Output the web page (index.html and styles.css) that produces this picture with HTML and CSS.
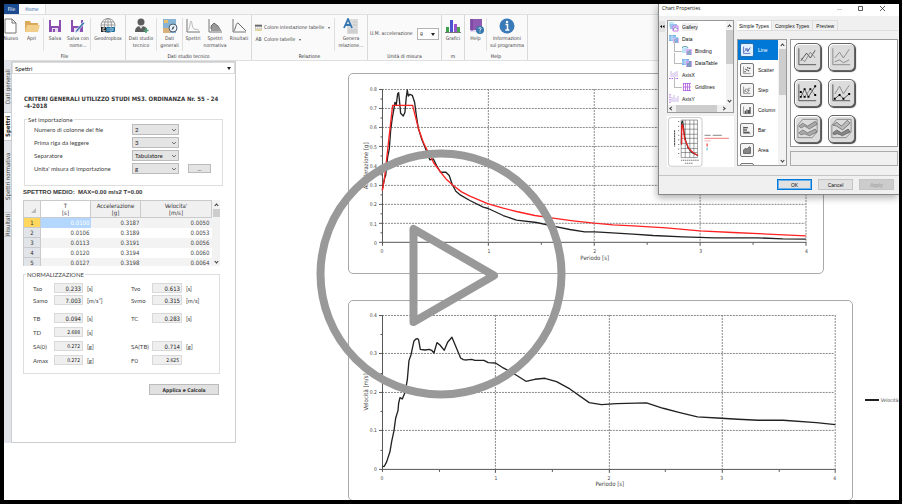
FILE: index.html
```html
<!DOCTYPE html>
<html lang="it">
<head>
<meta charset="utf-8">
<title>Spettri</title>
<link rel="stylesheet" href="styles.css">
</head>
<body>
<div class="app">
  <nav class="tabstrip"><button class="tab-file">File</button><button class="tab-home">Home</button></nav>

  <header class="ribbon">
    <section class="group group-file">
      <div class="tools">
        <button class="tool clipped"><svg viewBox="0 0 16 16"><path d="M3 1h7l4 4v10H3z" fill="#fff" stroke="#777"/><path d="M10 1v4h4" fill="none" stroke="#777"/></svg><span>Nuovo</span></button>
        <button class="tool sep"><svg viewBox="0 0 16 16"><path d="M1 3h5l1 2h7v9H1z" fill="#dba957"/><path d="M3 7h13l-2 7H1z" fill="#f2cf8b"/></svg><span>Apri</span></button>
        <button class="tool"><svg viewBox="0 0 16 16"><path d="M2 2h12v12H2z" fill="#8a4fb0"/><path d="M4 2h8v6H4z" fill="#fff"/><path d="M5 10h6v4H5z" fill="#e9dcf2"/><path d="M6 11h2v3H6z" fill="#8a4fb0"/></svg><span>Salva</span></button>
        <button class="tool sep"><svg viewBox="0 0 16 16"><path d="M1 2h12v12H1z" fill="#8a4fb0"/><path d="M3 2h8v6H3z" fill="#fff"/><path d="M4 10h6v4H4z" fill="#e9dcf2"/><path d="M15 5l-8 9-2 1 1-3 7-8z" fill="#3d78b4" stroke="#fff" stroke-width=".6"/></svg><span>Salva con nome...</span></button>
        <button class="tool"><svg viewBox="0 0 16 16"><g fill="none" stroke="#888" stroke-width=".8"><circle cx="8" cy="7.500" r="7"/><ellipse cx="8" cy="7.500" rx="3.500" ry="7"/><path d="M1 7h14M2 4h12M8 0v15"/></g><rect x="1" y="9" width="5" height="5" fill="#222"/><rect x="6" y="9" width="9" height="5" rx="1" fill="#1d6c9c"/><path d="M5 10H3v3h2v-1" fill="none" stroke="#fff" stroke-width=".8"/><path d="M8 10v3M10 10h2v3h-2zM13 10v3" fill="none" stroke="#bfe0f2" stroke-width=".7"/></svg><span>Geodropbox</span></button>
      </div>
      <h2>File</h2>
    </section>
    <section class="group group-studio">
      <div class="tools">
        <button class="tool sep"><svg viewBox="0 0 16 16"><circle cx="8" cy="4" r="3.500" fill="#5c5c5c"/><path d="M2 14c0-5 3-6 6-6s6 1 6 4l-2 2z" fill="#5c5c5c"/><path d="M6 8l2 3 2-3z" fill="#ddd"/><path d="M13 10v5M10.500 12.500h5" stroke="#4b9b72" stroke-width="1.500"/></svg><span>Dati studio tecnico</span></button>
        <button class="tool sep"><svg viewBox="0 0 16 16"><rect x="1" y="1" width="13" height="14" fill="#87b4d4"/><path d="M2 2h4v3H2z" fill="#e6bd6b"/><path d="M1 10h7v5H1z" fill="#d8b27a"/><circle cx="11" cy="10" r="4" fill="#eef4fa" stroke="#46586e"/><path d="M12.500 8l-1 3-2 1 1-3z" fill="#46586e"/></svg><span>Dati generali</span></button>
        <button class="tool"><svg viewBox="0 0 16 16" fill="none"><path d="M2 1v13h13" stroke="#777"/><path d="M3 12c2-1 2-9 3-9s1 7 3 8l5 1" stroke="#aaa" stroke-width=".8"/></svg><span>Spettri</span></button>
        <button class="tool"><svg viewBox="0 0 16 16"><path d="M4 13V8l3-3 4 3 2 5z" fill="#999"/><path d="M2 1v13h13" stroke="#777" fill="none"/><path d="M4 11V8l3-3 4 3 3 5" stroke="#555" fill="none" stroke-width=".8"/></svg><span>Spettri normativa</span></button>
        <button class="tool"><svg viewBox="0 0 16 16" fill="none"><path d="M2 1v13h13" stroke="#777"/><path d="M3 13c2-4 2-8 4-8l3 3 5 5" stroke="#666"/></svg><span>Risultati</span></button>
      </div>
      <h2>Dati studio tecnico</h2>
    </section>
    <section class="group group-report">
      <div class="tools">
        <div class="stack">
          <button class="row-tool"><svg viewBox="0 0 8 8"><rect x=".5" y="1" width="7" height="6" fill="#fff" stroke="#aaa" stroke-width=".6"/><rect y="1" width="8" height="2" fill="#666"/><path d="M0 7h8" stroke="#e6d37a" stroke-width="1.500"/><path d="M3 3v4M5.500 3v4M0 5h8" stroke="#aaa" stroke-width=".5"/></svg>Colore intestazione tabelle <i class="caret"></i></button>
          <button class="row-tool"><b>AB</b>Colore tabelle <i class="caret"></i></button>
        </div>
        <button class="tool lead"><svg viewBox="0 0 16 16"><rect x="4" y="1" width="11" height="15" fill="#dcdcdc"/><path d="M5 12h9M5 14h9M10 4h4M10 7h4" stroke="#c4c4c4"/><path d="M1 10L5 1l4 9M2.500 7h5" fill="none" stroke="#3576b5" stroke-width="1.800"/></svg><span>Genera relazione...</span></button>
      </div>
      <h2>Relazione</h2>
    </section>
    <section class="group group-units">
      <div class="tools"><label for="um">U.M. accelerazione</label><div class="pick"><select id="um"><option>g</option></select></div></div>
      <h2>Unità di misura</h2>
    </section>
    <section class="group group-charts">
      <div class="tools"><button class="tool"><svg viewBox="0 0 16 16"><path d="M1 9h3v5H1z" fill="#3ba24c"/><path d="M5 2h3v12H5z" fill="#4a55cf"/><path d="M9 6h3v8H9z" fill="#9a55cc"/><path d="M12 9h3v5h-3z" fill="#46a84e"/><path d="M0 14.500h16" stroke="#777"/></svg><span>Grafici</span></button></div>
      <h2>m</h2>
    </section>
    <section class="group group-help">
      <div class="tools">
        <button class="tool sep"><svg viewBox="0 0 16 16"><path d="M2 1h12v12H2z" fill="#8f5bb2"/><path d="M2 12h12v2H2z" fill="#e7daf0"/><path d="M4 1v12" stroke="#6d3c92"/><circle cx="12" cy="12" r="4" fill="#3678ad"/><path d="M10.800 11c0-2 2.600-1.600 2.400-.2L12 12v.8M12 13.500v1" stroke="#fff" fill="none" stroke-width=".8"/></svg><span>Help</span></button>
        <button class="tool"><svg viewBox="0 0 16 16"><circle cx="8" cy="8" r="7.500" fill="#3b7ab8"/><circle cx="8" cy="4" r="1.200" fill="#fff"/><path d="M6.500 6.500H8.500V12M6.300 12h4" stroke="#fff" fill="none" stroke-width="1.500"/></svg><span class="nowrap">Informazioni<br>sul programma</span></button>
      </div>
      <h2>Help</h2>
    </section>
  </header>

  <main class="work">
    <nav class="side-tabs"><button>Dati generali</button><button class="active">Spettri</button><button>Spettri normativa</button><button>Risultati</button></nav>

    <section class="panel">
      <div class="pick page-pick"><select aria-label="Pagina"><option>Spettri</option></select></div>
      <div class="panel-body">
        <h1>CRITERI GENERALI UTILIZZO STUDI MS3. ORDINANZA Nr. 55 - 24<br>-4-2018</h1>
        <fieldset class="import">
          <legend>Set importazione</legend>
          <label for="cols">Numero di colonne del file</label><select id="cols"><option>2</option></select>
          <label for="first">Prima riga da leggere</label><select id="first"><option>3</option></select>
          <label for="separator">Separatore</label><select id="separator"><option>Tabulatore</option></select>
          <label for="unit">Unita' misura di importazione</label><select id="unit"><option>g</option></select><button>...</button>
        </fieldset>
        <h3>SPETTRO MEDIO:&nbsp; MAX=0.00 m/s2 T=0.00</h3>
        <div class="sheet">
          <table>
            <thead><tr><th class="corner"><svg viewBox="0 0 5 5"><path d="M5 0v5H0z" fill="#bbb"/></svg></th><th class="current">T<br>[s]</th><th>Accelerazione<br>[g]</th><th>Velocita'<br>[m/s]</th></tr></thead>
            <tbody>
              <tr><th class="current">1</th><td class="selected">0.0100</td><td>0.3187</td><td>0.0050</td></tr>
              <tr><th>2</th><td>0.0106</td><td>0.3189</td><td>0.0053</td></tr>
              <tr><th>3</th><td>0.0113</td><td>0.3191</td><td>0.0056</td></tr>
              <tr><th>4</th><td>0.0120</td><td>0.3194</td><td>0.0060</td></tr>
              <tr><th>5</th><td>0.0127</td><td>0.3198</td><td>0.0064</td></tr>
            </tbody>
          </table>
          <div class="scroll"><i class="up"></i><span></span><i class="down"></i></div>
        </div>
        <fieldset class="norm">
          <legend>NORMALIZZAZIONE</legend>
          <div class="fields">
            <label for="tao">Tao</label><input id="tao" value="0.233"><span>[s]</span>
            <label for="tvo">Tvo</label><input id="tvo" value="0.613"><span>[s]</span>
            <label for="samo">Samo</label><input id="samo" value="7.003"><span>[m/s²]</span>
            <label for="svmo">Svmo</label><input id="svmo" value="0.315"><span>[m/s]</span>
          </div>
          <div class="fields wide">
            <label for="tb">TB</label><input id="tb" value="0.094"><span>[s]</span>
            <label for="tc">TC</label><input id="tc" value="0.283"><span>[s]</span>
            <label for="td">TD</label><input class="light" id="td" value="2.688"><span>[s]</span>
            <span></span><span></span><span></span>
            <label for="sa0">SA(0)</label><input class="light" id="sa0" value="0.272"><span>[g]</span>
            <label for="satb">SA(TB)</label><input id="satb" value="0.714"><span>[g]</span>
            <label for="amax">Amax</label><input class="light" id="amax" value="0.272"><span>[g]</span>
            <label for="f0">F0</label><input class="light" id="f0" value="2.625"><span></span>
          </div>
        </fieldset>
        <button class="apply">Applica e Calcola</button>
      </div>
    </section>

    <section class="charts">
      <div class="card card-acc">
        <svg viewBox="349 74 474 199">
          <g class="grid"><path d="M382 89.500H806M382 108.500H806M382 127.500H806M382 146.500H806M382 166.500H806M382 185.500H806M382 204.500H806M382 223.500H806M488.500 89V243M594.500 89V243M700.500 89V243M806.500 89V243"/></g>
          <g class="axis"><path d="M382.500 89V246M379 242.500H807"/><path d="M379 89.500h3M379 108.500h3M379 127.500h3M379 146.500h3M379 166.500h3M379 185.500h3M379 204.500h3M379 223.500h3M380.500 99h2M380.500 118h2M380.500 137h2M380.500 156h2M380.500 175h2M380.500 195h2M380.500 214h2M380.500 233h2M488.500 243v3M594.500 243v3M700.500 243v3M806.500 243v3M435.500 243v2M541.500 243v2M647.500 243v2M753.500 243v2"/></g>
          <g class="ticks"><text x="377" y="91">0.8</text><text x="377" y="110">0.7</text><text x="377" y="129">0.6</text><text x="377" y="149">0.5</text><text x="377" y="168">0.4</text><text x="377" y="187">0.3</text><text x="377" y="206">0.2</text><text x="377" y="226">0.1</text><text x="377" y="245">0</text></g>
          <g class="ticks mid"><text x="382" y="253">0</text><text x="489" y="253">1</text><text x="595" y="253">2</text><text x="701" y="253">3</text><text x="807" y="253">4</text></g>
          <text class="name" x="595" y="260">Periodo [s]</text>
          <text class="name" transform="translate(368 166) rotate(-90)">Accelerazione [g]</text>
          <g transform="translate(340 64) scale(.33333)">
            <polyline class="line" points="127,378 134,342 137,335 143,280 148,255 152,200 157,162 160,145 165,115 169,122 173,90 176,86 179,115 182,148 190,156 195,145 199,100 202,78 205,96 210,91 217,94 224,115 230,160 235,192 245,225 260,262 270,288 280,285 290,305 302,325 318,325 328,335 337,362 348,382 362,394 390,410 430,430 445,434 490,455 530,469 590,476 640,487 690,497 735,504 763,504 780,505 880,511 940,515 1030,519 1125,522 1255,522 1330,525 1399,526"/>
            <polyline class="line red" points="127,380 134,340 145,240 158,124 218,124 235,192 250,235 265,265 282,298 300,322 320,347 340,365 365,384 390,397 445,420 490,433 530,443 585,455 640,463 700,471 763,478 820,483 880,486 980,492 1080,501 1180,506 1399,516"/>
          </g>
        </svg>
      </div>
      <div class="card-row">
        <div class="card card-vel">
          <svg viewBox="349 301 503 199">
            <g class="grid"><path d="M382 315.500H835M382 353.500H835M382 392.500H835M382 430.500H835M495.500 315V469M609.500 315V469M722.500 315V469M835.500 315V469"/></g>
            <g class="axis"><path d="M382.500 315V472M379 469.500H836"/><path d="M379 315.500h3M379 353.500h3M379 392.500h3M379 430.500h3M380.500 334.500h2M380.500 373.500h2M380.500 411.500h2M380.500 450.500h2M495.500 470v3M609.500 470v3M722.500 470v3M835.500 470v3M439.500 470v2M552.500 470v2M665.500 470v2M779.500 470v2"/></g>
            <g class="ticks"><text x="377" y="317">0.4</text><text x="377" y="355">0.3</text><text x="377" y="394">0.2</text><text x="377" y="432">0.1</text><text x="377" y="471">0</text></g>
            <g class="ticks mid"><text x="382" y="480">0</text><text x="496" y="480">1</text><text x="609" y="480">2</text><text x="722" y="480">3</text><text x="835" y="480">4</text></g>
            <text class="name" x="610" y="486">Periodo [s]</text>
            <text class="name" transform="translate(368 392) rotate(-90)">Velocità [m/s]</text>
            <g transform="translate(340 290) scale(.33333)">
              <polyline class="line" points="127,530 133,529 140,516 150,485 155,455 162,422 167,385 174,362 176,340 180,323 187,327 195,308 202,270 207,212 213,195 222,153 228,147 233,146 236,150 241,178 255,180 268,178 275,181 282,189 291,158 300,165 313,181 323,157 336,142 362,204 370,209 380,210 395,208 405,211 432,211 445,218 467,219 490,234 520,250 558,274 585,268 615,265 650,275 690,297 748,338 785,344 830,341 920,339 970,355 1020,368 1073,381 1145,385 1195,388 1255,391 1330,391 1430,398 1487,404"/>
            </g>
          </svg>
        </div>
        <div class="legend-key"><i></i>Velocità</div>
      </div>
    </section>
  </main>
</div>

<svg class="play" viewBox="0 0 250 250"><circle cx="125" cy="125" r="120.500"/><path d="M97.500 80V173L178 126.500z"/></svg>

<div class="dialog" role="dialog" aria-label="Chart Properties">
  <div class="titlebar"><span>Chart Properties</span>
    <svg viewBox="0 0 60 10"><path d="M1 5.500h5" stroke="#ccc"/><path d="M22.500 2.500h4v4h-4z" fill="none" stroke="#333" stroke-width=".8"/><path d="M44 2l5 5M49 2l-5 5" stroke="#333" stroke-width=".8"/></svg>
  </div>
  <div class="dialog-body">
    <button class="collapse" aria-label="Collapse"><svg viewBox="0 0 6 11"><path d="M3 4v3L1 5.500zM5.500 4v3l-2-1.500z"/></svg></button>
    <div class="left">
      <div class="tree">
        <ul>
          <li><svg viewBox="0 0 10 10"><path d="M0 0h5v5H0z" fill="#bdeaf2"/><path d="M1 2h7v5H1z" fill="#9cc3f0"/><path d="M4 4h5v5H4z" fill="#fff" stroke="#c47be8"/><path d="M4 8l2-3 3 2" stroke="#55a" fill="none" stroke-width=".7"/></svg><span class="current">Gallery</span></li>
          <li><svg viewBox="0 0 10 10"><path d="M0 1h7v6H0z" fill="#74b1ea"/><path d="M0 3h7M0 5h7M3 1v6" stroke="#fff" stroke-width=".5"/><path d="M4 4h6v5H4z" fill="#dcb8f5"/><path d="M6 5v4M8 3v6" stroke="#32a6c2"/></svg><span>Data</span></li>
          <li class="child"><svg viewBox="0 0 10 10"><ellipse cx="3" cy="2" rx="3" ry="1.500" fill="#dff" stroke="#69a"/><path d="M0 2v5h6V2" fill="#bfe3f5"/><path d="M4 3h6v6H4z" fill="#dcb0f5"/><path d="M6 5v4M8 4v5" stroke="#3d9c9a"/></svg><span>Binding</span></li>
          <li class="child"><svg viewBox="0 0 10 10"><path d="M0 1h7v6H0z" fill="#74b1ea"/><path d="M0 3h7M0 5h7M3 1v6" stroke="#fff" stroke-width=".5"/><path d="M4 3h6v6H4z" fill="#cfa4f2"/><path d="M6 5v4M8 3v6" stroke="#2f8c88"/></svg><span>DataTable</span></li>
          <li><svg viewBox="0 0 10 10"><path d="M2 1v6M4 3v4M6 2v5M8 1v6" stroke="#c9b7e8"/><path d="M0 8.500h9" stroke="#b35be0" stroke-dasharray="1.500 1"/></svg><span>AxisX</span></li>
          <li class="child"><svg viewBox="0 0 10 10"><path d="M1.500 1v8M3.500 1v8M5.500 1v8M7.500 1v8M1 1.500h8M1 5h8M1 8.500h8" stroke="#b35be0" stroke-width=".8"/></svg><span>Gridlines</span></li>
          <li><svg viewBox="0 0 10 10"><path d="M3 3v5M5 1v7M7 4v4M9 2v6" stroke="#c9b7e8"/><path d="M1 0v9" stroke="#b35be0" stroke-dasharray="1.500 1"/></svg><span>AxisY</span></li>
        </ul>
        <div class="scroll"><i class="up"></i><span></span><i class="down"></i></div>
        <div class="scroll-h"><i class="prev"></i><span></span><i class="next"></i></div>
      </div>
      <div class="preview">
        <svg viewBox="0 0 66 51"><rect x="1.500" y="1.500" width="33" height="48" rx="3" fill="#fff" stroke="#ccc"/><g stroke="#444" stroke-width=".5"><path d="M14 4v37M18 4v37M22.500 4v37M26.500 4v37M30 4v37M14 4h16M14 8h16M14 13h16M14 18h16M14 22h16M14 27h16M14 32h16M14 36h16M14 41h16"/></g><path d="M14 28l.5-22 1-1 2 16 3 10 4 5 6 3" fill="none" stroke="#222"/><path d="M14.500 28V9h1l2 14 4 9 4 4 5 3" fill="none" stroke="#e22" stroke-width="1.200"/><path d="M7.500 14v16" stroke="#444" stroke-dasharray="2 .5"/><path d="M11.500 5v36" stroke="#666" stroke-dasharray="1 3.500"/><path d="M18 46.500h8M14 43.500h17" stroke="#444" stroke-dasharray="1 1"/><path d="M37 19h6M45 19h9" stroke="#333" stroke-width=".6"/><path d="M37 22h24" stroke="#e22" stroke-width=".6"/><path d="M37 24.500h6" stroke="#e88" stroke-width=".6"/><path d="M39.500 27v3" stroke="#e22"/><path d="M39.500 31v3" stroke="#5bc"/></svg>
      </div>
    </div>
    <div class="right">
      <div class="type-tabs"><button class="active">Simple Types</button><button>Complex Types</button><button>Preview</button></div>
      <div class="types">
        <div class="type-list">
          <ul>
            <li class="active"><svg viewBox="0 0 14 14"><path d="M3 3v8h8M4 9l3-4 1 3 3-4M5 5l3 4 2-4" class="g"/></svg>Line</li>
            <li><svg viewBox="0 0 14 14"><path d="M3 3v8h8" class="g"/><path d="M4 9h1.500M6 7h1.500M8 8h1.500M9 5h2M5 6h1M7 4.500h1.500" class="k"/></svg>Scatter</li>
            <li><svg viewBox="0 0 14 14"><path d="M3 3v8h8M3 8h2V6h3v2h1V5h2M4 10l1-2 3 2 2-3" class="g"/></svg>Step</li>
            <li><svg viewBox="0 0 14 14"><path d="M3 3v8h8.500" class="g"/><path d="M5 8v3M7 6.500v4.500M9 7v4M10.500 3.500V11" class="k"/></svg>Column</li>
            <li><svg viewBox="0 0 14 14"><path d="M3 3v8h8" class="g"/><path d="M3 4.500h5M3 7h4M3 9.500h7" class="k"/></svg>Bar</li>
            <li><svg viewBox="0 0 14 14"><path d="M3 11V7l2-2 2 1 3-3 1 1v7z" fill="#888" stroke="#444" stroke-width=".8"/></svg>Area</li>
            <li><svg viewBox="0 0 14 14"><circle cx="7" cy="7" r="4" fill="#aaa"/></svg></li>
          </ul>
          <div class="scroll"><i class="up"></i><span></span><i class="down"></i></div>
        </div>
        <div class="gallery">
          <div class="styles">
            <button aria-label="Line"><svg viewBox="0 0 26 26"><path d="M4 4v17h18" class="a"/><path d="M6 17l6-8 4 5 5-8" class="a"/><path d="M6 14l4 4 6-10 5 6" class="b"/></svg></button>
            <button aria-label="Stacked line"><svg viewBox="0 0 26 26"><path d="M4 4v17h18" class="b"/><path d="M6 14l5-6 4 6 6-9" class="b"/><path d="M6 18l5-2 4 3 6-3" class="b"/></svg></button>
            <button aria-label="Line with markers"><svg viewBox="0 0 26 26"><path d="M4 4v17h18" class="a"/><path d="M6 17l4-8 4 8 7-11" class="a"/><path d="M6 12l4 5 6-8 5 6" class="b"/><path d="M6 17h0M10 9h0M14 17h0M16 9h0M21 15h0M10 17h0M6 12h0M21 6h0" class="m"/></svg></button>
            <button aria-label="Stacked line with markers"><svg viewBox="0 0 26 26"><path d="M4 4v17h18" class="a"/><path d="M6 14l5-8 4 8 6-9" class="b"/><path d="M6 19l5-4 4 4 6-5" class="a"/><path d="M6 19h0M11 15h0M15 19h0M21 14h0" class="m"/></svg></button>
            <button aria-label="3D line"><svg viewBox="0 0 26 26"><path d="M3 9l5-6h15v13l-5 6H3z" class="b"/><path d="M4 10l4-3 5 3 8-5 2 3-8 5-5-3-4 2zM4 17l4-3 5 3 8-4 2 3-8 4-5-2-4 1z" fill="#aaa" stroke="#555" stroke-width=".6"/></svg></button>
            <button aria-label="3D stacked line"><svg viewBox="0 0 26 26"><path d="M3 9l5-6h15v13l-5 6H3z" class="b"/><path d="M4 9l4-3 5 4 6-6 3 3-8 7-6-4z" fill="#bbb" stroke="#444" stroke-width=".6"/><path d="M4 17l4-3 5 3 7-4 2 3-8 4-5-2-4 1z" fill="#888" stroke="#444" stroke-width=".6"/></svg></button>
          </div>
          <div class="status"></div>
        </div>
      </div>
    </div>
  </div>
  <footer><button class="default">OK</button><button>Cancel</button><button disabled>Apply</button></footer>
</div>
</body>
</html>
```
FILE: styles.css
```css
* { box-sizing: border-box; margin: 0; padding: 0; }
html, body { height: 100%; }
body {
  position: relative;
  overflow: hidden;
  border: solid #000;
  border-width: 4px 3px 4px 4px;
  background: #fff;
  color: #444;
  font: 5px/7px "DejaVu Sans Condensed", "Liberation Sans", sans-serif;
}
button, select, input { font: inherit; color: inherit; border: 0; background: none; border-radius: 0; }
select { appearance: none; }
ul { list-style: none; }
svg { display: block; }

/* ribbon */
.tabstrip { display: flex; height: 10px; background: #f5f5f6; }
.tab-file { width: 15px; background: #1b4a91; color: #fff; }
.tab-home { width: 27px; background: #fcfcfd; color: #2a5ca5; border-right: 1px solid #ddd; }
.ribbon { display: flex; height: 47px; background: #fafafb; border: solid #dedfe0; border-width: 1px 0; }
.group { display: flex; flex-direction: column; flex: none; border-right: 1px solid #d9d9da; }
.group h2 { font: inherit; text-align: center; height: 8px; line-height: 8px; color: #333; }
.tools { display: grid; flex: 1; padding-top: 3px; }
.group-file { width: 122px; }
.group-file .tools { grid-template-columns: 16px 24px 22px 25px 34px; }
.group-studio { width: 126px; }
.group-studio .tools { grid-template-columns: 31px 26px 20px 24px 24px; }
.group-report { width: 116px; }
.group-report .tools { grid-template-columns: 82px 33px; }
.group-units { width: 74px; }
.group-units .tools { grid-template-columns: 1fr 22px; align-items: center; padding: 0 2px; }
.group-charts { width: 23px; }
.group-help { width: 63px; }
.group-help .tools { grid-template-columns: 22px 40px; }
.tool { display: flex; flex-direction: column; align-items: center; justify-self: stretch; height: 33px; overflow: visible; line-height: 7px; }
.tool svg { width: 16px; height: 16px; flex: none; margin-bottom: 1px; }
.nowrap { white-space: nowrap; }
.sep { border-right: 1px solid #e0e0e1; }
.lead { border-left: 1px solid #e0e0e1; }
.clipped { align-items: flex-end; padding-right: 2px; overflow: hidden; }
.stack { display: grid; align-content: start; gap: 5px; padding: 6px 0 0 3px; }
.row-tool { display: flex; align-items: center; gap: 2px; white-space: nowrap; }
.row-tool svg { width: 7px; height: 7px; }
.row-tool b { width: 7px; font-weight: 400; }
.caret { border: solid transparent; border-width: 2px 1px 0; border-top-color: #555; margin-left: 2px; }
.pick { position: relative; border: 1px solid #b5b5b5; background: #fff; }
.pick select { width: 100%; padding: 0 2px; display: block; height: 10px; color: #222; }
.pick::after { content: ""; position: absolute; right: 3px; top: 4px; border: solid transparent; border-width: 3px 2px 0; border-top-color: #222; }

/* work area */
.work { display: flex; align-items: flex-start; }
.side-tabs { width: 7px; height: 382px; background: #e1e4e8; display: flex; flex-direction: column; }
.side-tabs button { writing-mode: vertical-rl; transform: rotate(180deg); width: 7px; height: 72px; border-top: 1px solid #c4c8cc; line-height: 7px; font-size: 6px; color: #444; text-align: center; white-space: nowrap; }
.side-tabs button:first-child { height: 52px; }
.side-tabs button:last-child { height: 24px; }
.side-tabs button.active { background: #fff; height: 28px; font-weight: 700; color: #222; }
.panel { width: 225px; height: 382px; flex: none; border: 1px solid #ccced0; font-family: Lato, "Liberation Sans", sans-serif; font-size: 6px; }
.page-pick { border-color: #dcdcdc; height: 12px; }
.panel-body { padding: 21px 15px 0 11px; }
h1, h3 { line-height: 7px; font-weight: 700; color: #333; white-space: nowrap; }
h1 { font-family: "DejaVu Sans Condensed", sans-serif; font-size: 6px; margin-left: 1px; }
fieldset { border: 1px solid #dedede; min-width: 0; }
legend { margin-left: -7px; padding: 0 1px; height: 7px; }
.import { margin: 7px -3px 0 1px; padding: 1px 0 11px 9px; display: grid; grid-template-columns: 98px 47px 32px; row-gap: 2px; align-items: center; }
.import label { grid-column: 1; }
.import select { height: 11px; border: 1px solid #bbb; padding: 0 2px; background: #e4e4e4 url("data:image/svg+xml,%3Csvg xmlns='http://www.w3.org/2000/svg' width='6' height='4'%3E%3Cpath d='M1 1l2 2 2-2' fill='none' stroke='%23555' stroke-width='.8'/%3E%3C/svg%3E") no-repeat right 1px center; color: #222; }
.import button { margin-left: 9px; width: 23px; height: 9px; background: #e4e4e4; border: 1px solid #bbb; line-height: 4px; }
h3 { font-family: "Liberation Sans", sans-serif; font-size: 6px; margin: 3px 0 4px; }
.sheet { display: flex; height: 66px; overflow: hidden; font-family: "DejaVu Sans Condensed", sans-serif; }
.sheet table { flex: 1; border-collapse: collapse; table-layout: fixed; height: 67px; font-size: 6px; line-height: 7px; }
.sheet th { background: #f0f0f1; border: 1px solid #c9cacc; font-weight: 400; height: 10px; color: #333; }
.sheet thead th { height: 17px; }
.sheet thead .current { background: #fff; }
.sheet thead th:nth-child(1) { width: 17px; }
.sheet thead th:nth-child(2), .sheet thead th:nth-child(3) { width: 50px; }
.sheet tbody th { background: #e1e4e8; }
.sheet tbody th.current { background: #ffd75e; }
.sheet td { text-align: right; height: 10px; padding-right: 1px; }
.sheet td:last-child { padding-right: 2px; }
.sheet tbody tr:nth-child(odd) { background: #f3f3f3; }
.sheet td.selected { background: #b3d7ff; color: #fff; }
.corner svg { width: 5px; height: 5px; margin: 2px 4px 0 auto; }
.scroll { width: 8px; background: #f2f2f2; display: flex; flex-direction: column; align-items: center; }
.scroll i, .scroll-h i { width: 3px; height: 3px; border: solid #333; border-width: 1px 0 0 1px; transform: rotate(45deg); margin: 4px 0 2px; flex: none; }
.scroll i.down { transform: rotate(225deg); margin: auto 0 3px; }
.scroll span { width: 7px; height: 8px; background: #cdcdcd; }
.norm { margin-top: 5px; padding: 5px 0 8px 9px; }
.norm legend { color: #444; }
.fields { display: grid; grid-template-columns: 21px 29px 48px 21px 30px 1fr; gap: 2px 0; align-items: center; }
.fields span { padding-left: 4px; }
.fields.wide { row-gap: 4px; margin-top: 8px; }
.fields input { width: 100%; height: 10px; background: #efefef; border: 1px solid #d9d9d9; text-align: right; padding-right: 1px; font: 6px "DejaVu Sans Condensed", sans-serif; color: #222; }
.fields .light { font-size: 5px; padding-right: 2px; }
.apply { display: block; margin: 10px 1px 0 auto; width: 70px; height: 11px; border: 1px solid #bbb; background: #e1e1e1; font: 700 5px "DejaVu Sans Condensed", sans-serif; color: #333; }

/* charts */
.charts { flex: 1; min-width: 0; padding: 12px 0 0 112px; overflow: hidden; }
.card { border: 1px solid #a9a9a9; border-radius: 5px; }
.card svg { width: 100%; }
.card-acc { width: 86.3%; }
.card-row { display: flex; align-items: center; margin-top: 26px; white-space: nowrap; }
.card-vel { flex: none; width: 91.6%; }
.legend-key { display: flex; align-items: center; gap: 2px; margin-left: 12px; }
.legend-key i { width: 14px; height: 2px; background: #222; flex: none; }
.grid path { stroke: #888; stroke-dasharray: 2 1; fill: none; }
.axis path { stroke: #555; fill: none; }
.ticks { text-anchor: end; fill: #444; }
.ticks.mid { text-anchor: middle; }
.name { text-anchor: middle; fill: #444; font-size: 6px; }
.line { fill: none; stroke: #222; stroke-width: 4; stroke-linejoin: round; }
.line.red { stroke: #f22; }

.play { position: absolute; left: 312px; top: 145px; width: 250px; height: 250px; fill: none; stroke: #999; stroke-width: 8; stroke-linejoin: round; }

/* dialog */
.dialog { position: absolute; right: 0; top: 0; width: 241px; background: #f0f0f0; border: solid #888; border-width: 0 0 1px 1px; box-shadow: -1px 3px 7px rgba(0, 0, 0, .3); font: 5px/8px "Liberation Sans", sans-serif; color: #111; }
.titlebar { display: flex; justify-content: space-between; height: 12px; background: #fff; padding: 0 3px; font: 5px/9px "Open Sans", sans-serif; }
.titlebar svg { width: 60px; height: 10px; }
.dialog-body { display: flex; padding: 4px 1px 8px 0; border-bottom: 1px solid #c4c4c4; }
.collapse { width: 6px; height: 11px; background: #e0e0e0; margin: 1px 2px 0 0; flex: none; }
.left { width: 67px; flex: none; margin-right: 3px; }
.tree { display: grid; grid-template-columns: 1fr 7px; height: 93px; background: #fff; border: 1px solid #999; }
.tree li { display: flex; align-items: center; height: 12px; gap: 3px; padding-left: 1px; }
.tree .child { padding-left: 14px; position: relative; }
.tree .child::before { content: ""; position: absolute; left: 6px; bottom: 5px; width: 7px; height: 10px; border: solid #bbb; border-width: 0 0 1px 1px; }
.tree svg { width: 10px; height: 10px; flex: none; }
.tree .current { background: #f0f0f0; }
.tree .scroll { width: 7px; height: 84px; }
.tree .scroll span { height: 34px; }
.scroll-h { grid-column: 1 / -1; height: 7px; background: #f0f0f0; display: flex; align-items: center; padding: 0 8px 0 2px; }
.scroll-h i { margin: 0; transform: rotate(-45deg); }
.scroll-h i.next { transform: rotate(135deg); }
.scroll-h span { flex: 1; height: 7px; background: #cdcdcd; margin: 0 5px 0 3px; }
.preview { background: #fff; margin-top: 3px; height: 51px; }
.right { flex: 1; min-width: 0; }
.type-tabs { display: flex; height: 11px; border-bottom: 1px solid #ddd; }
.type-tabs button { padding: 0 3px; border: solid #ddd; border-width: 1px 1px 0 0; white-space: nowrap; }
.type-tabs .active { background: #fff; padding: 0 2px; }
.types { display: flex; gap: 3px; margin-top: 8px; height: 127px; }
.type-list { width: 50px; flex: none; display: flex; background: #fff; border: 1px solid #999; overflow: hidden; }
.type-list ul { flex: 1; }
.type-list li { display: flex; align-items: center; gap: 4px; height: 20px; padding-left: 2px; }
.type-list li svg { width: 14px; height: 14px; border: 1px solid #777; border-radius: 2px; background: #f4f4f4; }
.type-list .active { background: #0078d7; color: #fff; }
.type-list .active svg { background: #dff1ff; border-color: #2b6faa; }
.type-list .scroll span { height: 46px; }
.g { fill: none; stroke: #777; stroke-width: .8; }
.active .g { stroke: #3949ab; }
.k { fill: none; stroke: #222; stroke-width: 1.2; }
.gallery { flex: 1; display: flex; flex-direction: column; gap: 4px; }
.styles { flex: 1; display: grid; grid-template-columns: 27px 27px; grid-auto-rows: 28px; gap: 8px 7px; background: #fff; border: 1px solid #999; padding: 3px; }
.styles button { border: 1px solid #666; border-radius: 5px; background: #dcdcdc; box-shadow: inset 1px 1px 0 #fff, 1px 1px 1px #444; }
.styles svg { width: 100%; height: 26px; }
.a { fill: none; stroke: #333; stroke-width: .8; }
.b { fill: none; stroke: #777; stroke-width: .8; }
.m { stroke: #000; stroke-width: 2; stroke-linecap: square; }
.status { height: 15px; border: 1px solid #aaa; }
.dialog footer { display: flex; justify-content: flex-end; gap: 6px; padding: 3px 5px 4px; }
.dialog footer button { width: 35px; height: 11px; background: #e1e1e1; border: 1px solid #c4c4c4; }
.dialog footer .default { border: 1px solid #0078d7; box-shadow: inset 0 0 0 1px #6bb0ea; }
.dialog footer button:disabled { background: #ccc; color: #999; }
```
